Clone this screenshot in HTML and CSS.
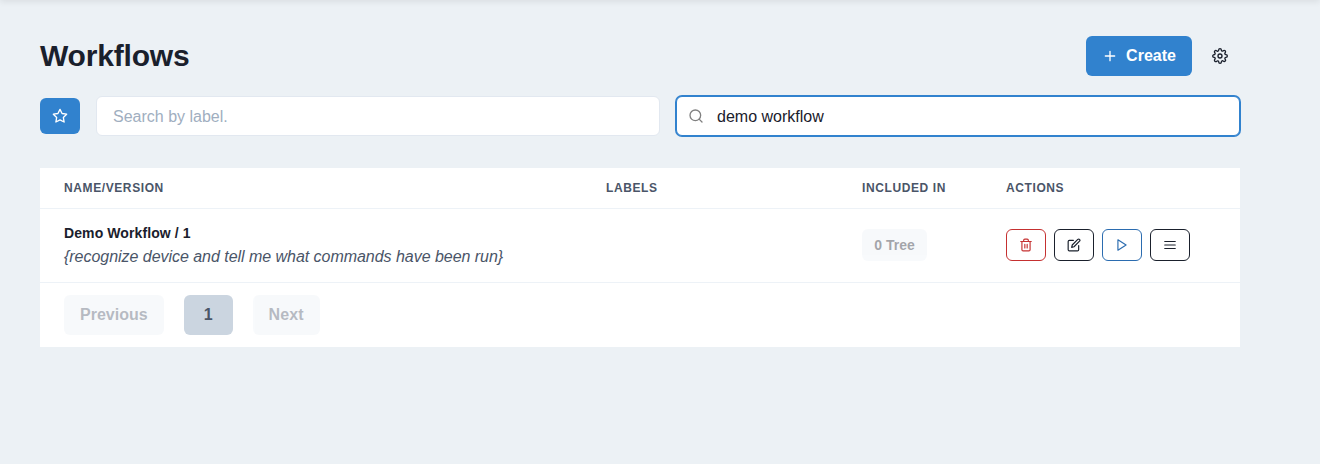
FILE: index.html
```html
<!DOCTYPE html>
<html lang="en">
<head>
<meta charset="utf-8">
<title>Workflows</title>
<link rel="stylesheet" href="styles.css">
</head>
<body>
<div class="topbar-shadow"></div>
<main class="page">
  <header class="header">
    <h1 class="title">Workflows</h1>
    <div class="header-actions">
      <button class="create" type="button">
        <svg class="icon" viewBox="0 0 24 24"><path d="M12 5v14M5 12h14"/></svg>
        <span>Create</span>
      </button>
      <button class="settings" type="button" aria-label="Settings">
        <svg class="icon" viewBox="0 0 24 24"><circle cx="12" cy="12" r="3"/><path d="M19.4 15a1.65 1.65 0 0 0 .33 1.82l.06.06a2 2 0 0 1 0 2.83 2 2 0 0 1-2.83 0l-.06-.06a1.65 1.65 0 0 0-1.82-.33 1.65 1.65 0 0 0-1 1.51V21a2 2 0 0 1-2 2 2 2 0 0 1-2-2v-.09A1.65 1.65 0 0 0 9 19.4a1.65 1.65 0 0 0-1.82.33l-.06.06a2 2 0 0 1-2.83 0 2 2 0 0 1 0-2.83l.06-.06a1.65 1.65 0 0 0 .33-1.82 1.65 1.65 0 0 0-1.51-1H3a2 2 0 0 1-2-2 2 2 0 0 1 2-2h.09A1.65 1.65 0 0 0 4.6 9a1.65 1.65 0 0 0-.33-1.82l-.06-.06a2 2 0 0 1 0-2.83 2 2 0 0 1 2.83 0l.06.06a1.65 1.65 0 0 0 1.82.33H9a1.65 1.65 0 0 0 1-1.51V3a2 2 0 0 1 2-2 2 2 0 0 1 2 2v.09a1.65 1.65 0 0 0 1 1.51 1.65 1.65 0 0 0 1.82-.33l.06-.06a2 2 0 0 1 2.83 0 2 2 0 0 1 0 2.83l-.06.06a1.65 1.65 0 0 0-.33 1.82V9a1.65 1.65 0 0 0 1.51 1H21a2 2 0 0 1 2 2 2 2 0 0 1-2 2h-.09a1.65 1.65 0 0 0-1.51 1z"/></svg>
      </button>
    </div>
  </header>

  <div class="filters">
    <button class="star" type="button" aria-label="Favorites">
      <svg class="icon" viewBox="0 0 24 24"><path d="M12 2l3.09 6.26L22 9.27l-5 4.87 1.18 6.88L12 17.77l-6.18 3.25L7 14.14 2 9.27l6.91-1.01L12 2z"/></svg>
    </button>
    <label class="field"><input class="input" type="text" placeholder="Search by label."></label>
    <label class="field field-focused">
      <svg class="icon search-icon" viewBox="0 0 24 24"><circle cx="11" cy="11" r="8"/><path d="M21 21l-4.35-4.35"/></svg>
      <input class="input" type="text" value="demo workflow">
    </label>
  </div>

  <section class="table">
    <div class="row head">
      <div>Name/Version</div><div>Labels</div><div>Included in</div><div>Actions</div>
    </div>
    <div class="row item">
      <div>
        <p class="name">Demo Workflow / 1</p>
        <p class="description">{recognize device and tell me what commands have been run}</p>
      </div>
      <div></div>
      <div><button class="tree" type="button" disabled>0 Tree</button></div>
      <div class="actions">
        <button class="action danger" type="button" aria-label="Delete"><svg class="icon small" viewBox="0 0 24 24"><path d="M3 6h18M19 6v14a2 2 0 0 1-2 2H7a2 2 0 0 1-2-2V6m3 0V4a2 2 0 0 1 2-2h4a2 2 0 0 1 2 2v2M10 11v6M14 11v6"/></svg></button>
        <button class="action" type="button" aria-label="Edit"><svg class="icon small" viewBox="0 0 24 24"><path d="M11 4H4a2 2 0 0 0-2 2v14a2 2 0 0 0 2 2h14a2 2 0 0 0 2-2v-7"/><path d="M18.5 2.5a2.121 2.121 0 0 1 3 3L12 15l-4 1 1-4 9.500-9.500z"/></svg></button>
        <button class="action run" type="button" aria-label="Run"><svg class="icon small" viewBox="0 0 24 24"><path d="M5 3l14 9-14 9V3z"/></svg></button>
        <button class="action" type="button" aria-label="Menu"><svg class="icon small" viewBox="0 0 24 24"><path d="M3 12h18M3 6h18M3 18h18"/></svg></button>
      </div>
    </div>
    <nav class="pagination">
      <button class="page-button" type="button" disabled>Previous</button>
      <button class="page-button current" type="button">1</button>
      <button class="page-button next" type="button" disabled>Next</button>
    </nav>
  </section>
</main>
</body>
</html>
```
FILE: styles.css
```css
* { box-sizing: border-box; }
body {
  margin: 0;
  min-height: 464px;
  background: #ecf1f5;
  color: #1a202c;
  font: 16px/24px "Liberation Sans", Arial, sans-serif;
}
p, h1 { margin: 0; }
button {
  display: flex;
  align-items: center;
  justify-content: center;
  margin: 0;
  padding: 0;
  border: 0;
  border-radius: 6px;
  background: none;
  color: inherit;
  font: inherit;
  font-weight: 700;
}
.icon {
  display: block;
  flex: none;
  width: 16px;
  height: 16px;
  fill: none;
  stroke: currentColor;
  stroke-width: 2;
  stroke-linecap: round;
  stroke-linejoin: round;
}
.small { width: 14px; height: 14px; }
.topbar-shadow {
  position: absolute;
  top: -10px;
  left: 0;
  right: 0;
  height: 10px;
  box-shadow: 0 2px 6px rgba(0, 0, 0, .08);
}
.page { padding: 36px 80px 0 40px; }
.header { display: flex; align-items: center; justify-content: space-between; height: 40px; }
.title { font-size: 30px; line-height: 40px; letter-spacing: -.18px; }
.header-actions { display: flex; gap: 8px; }
.create { gap: 8px; width: 106px; height: 40px; background: #3182ce; color: #fff; }
.settings { width: 40px; height: 40px; }
.filters {
  display: grid;
  grid-template-columns: 40px 564px 564px;
  align-items: center;
  gap: 16px;
  margin-top: 20px;
}
.star { width: 40px; height: 36px; background: #3182ce; color: #fff; }
.field {
  display: flex;
  align-items: center;
  height: 40px;
  padding: 0 16px;
  border: 1px solid #e2e8f0;
  border-radius: 6px;
  background: #fff;
}
.field-focused { gap: 13px; padding-left: 11px; border-color: #3182ce; box-shadow: 0 0 0 1px #3182ce; }
.search-icon { color: #808080; }
.input {
  flex: 1;
  min-width: 0;
  height: 38px;
  padding: 2px 0 0;
  border: 0;
  outline: 0;
  background: none;
  color: #1a202c;
  font: inherit;
}
.input::placeholder { color: #a0aec0; }
.table { margin-top: 32px; background: #fff; }
.row {
  display: grid;
  grid-template-columns: 542px 256px 144px 1fr;
  align-items: center;
  padding: 0 24px;
  border-bottom: 1px solid #edf2f7;
}
.head {
  height: 41px;
  color: #4a5568;
  font-size: 12px;
  font-weight: 700;
  line-height: 16px;
  letter-spacing: .6px;
  text-transform: uppercase;
}
.item { height: 74px; padding-bottom: 1px; }
.name { padding-top: 1px; font-size: 14px; font-weight: 700; line-height: 21px; letter-spacing: .1px; }
.description { padding-top: 1px; color: #4a5568; font-style: italic; letter-spacing: -.035px; }
.tree {
  width: 65px;
  height: 32px;
  background: #edf2f7;
  opacity: .4;
  font-size: 14px;
}
.actions { display: flex; gap: 8px; }
.action { width: 40px; height: 32px; border: 1px solid currentColor; }
.danger { color: #c53030; }
.run { color: #2b6cb0; }
.pagination { display: flex; gap: 20px; padding: 12px 24px; }
.page-button { height: 40px; padding: 0 16px; background: #edf2f7; color: #4a5568; }
.page-button:disabled { opacity: .4; }
.current { width: 49px; padding: 0; background: #cbd5e0; }
.next { width: 67px; padding: 0; letter-spacing: .15px; }
```
